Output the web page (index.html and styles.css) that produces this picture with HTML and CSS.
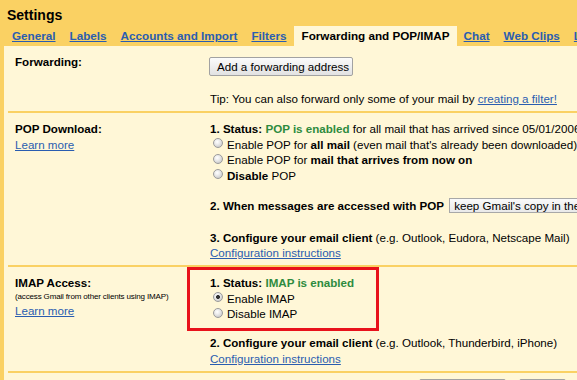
FILE: index.html
```html
<!DOCTYPE html>
<html lang="en">
<head>
<meta charset="utf-8">
<title>Settings</title>
<link rel="stylesheet" href="styles.css">
</head>
<body>
<div class="page">
  <header class="head">
    <h1 class="title">Settings</h1>
    <nav class="tabs">
      <a class="tab" href="#">General</a>
      <a class="tab" href="#">Labels</a>
      <a class="tab" href="#">Accounts and Import</a>
      <a class="tab" href="#">Filters</a>
      <span class="tab active">Forwarding and POP/IMAP</span>
      <a class="tab" href="#">Chat</a>
      <a class="tab" href="#">Web Clips</a>
      <a class="tab" href="#">Labs</a>
      <a class="tab" href="#">Offline</a>
    </nav>
  </header>

  <main class="panel">
    <section class="row">
      <div class="label"><b>Forwarding:</b></div>
      <div class="value">
        <div class="fwd-block"><button class="btn" type="button">Add a forwarding address</button></div>
        <div class="line">Tip: You can also forward only some of your mail by <a class="link" href="#">creating a filter!</a></div>
      </div>
    </section>

    <section class="row">
      <div class="label">
        <div class="line"><b>POP Download:</b></div>
        <div class="line"><a class="link" href="#">Learn more</a></div>
      </div>
      <div class="value">
        <div class="block">
          <div class="line"><b>1. Status: <span class="ok">POP is enabled</span></b> for all mail that has arrived since 05/01/2006 (hours ago)</div>
          <label class="line opt"><input class="radio" type="radio" name="pop"><span>Enable POP for <b>all mail</b> (even mail that's already been downloaded)</span></label>
          <label class="line opt"><input class="radio" type="radio" name="pop"><span>Enable POP for <b>mail that arrives from now on</b></span></label>
          <label class="line opt"><input class="radio" type="radio" name="pop"><span><b>Disable</b> POP</span></label>
        </div>
        <div class="line block2"><b>2. When messages are accessed with POP</b> <span class="select">keep Gmail's copy in the Inbox</span></div>
        <div class="line"><b>3. Configure your email client</b> (e.g. Outlook, Eudora, Netscape Mail)</div>
        <div class="line"><a class="link" href="#">Configuration instructions</a></div>
      </div>
    </section>

    <section class="row">
      <div class="label">
        <div class="line"><b>IMAP Access:</b></div>
        <div class="small">(access Gmail from other clients using IMAP)</div>
        <div class="line"><a class="link" href="#">Learn more</a></div>
      </div>
      <div class="value">
        <div class="block highlight">
          <div class="line"><b>1. Status: <span class="ok">IMAP is enabled</span></b></div>
          <label class="line opt"><input class="radio" type="radio" name="imap" checked><span>Enable IMAP</span></label>
          <label class="line opt"><input class="radio" type="radio" name="imap"><span>Disable IMAP</span></label>
        </div>
        <div class="line"><b>2. Configure your email client</b> (e.g. Outlook, Thunderbird, iPhone)</div>
        <div class="line"><a class="link" href="#">Configuration instructions</a></div>
      </div>
    </section>

    <div class="footer">
      <button class="btn btn-save" type="button">Save Changes</button>
      <button class="btn btn-cancel" type="button">Cancel</button>
    </div>
  </main>
</div>
</body>
</html>
```

FILE: styles.css
```css
html, body {
  margin: 0;
  padding: 0;
}
body {
  background: #fad163;
  font-family: "Liberation Sans", Arial, sans-serif;
  color: #000;
  overflow: hidden;
}
.page {
  width: 840px;
}
.head {
  padding-top: 6px;
}
.title {
  margin: 0 0 2px 7px;
  font-size: 14px;
  line-height: 18px;
  font-weight: bold;
}
.tabs {
  display: flex;
  height: 20px;
  padding-left: 5px;
  white-space: nowrap;
}
.tab {
  padding: 0 7px;
  font-size: 11.7px;
  line-height: 20px;
  font-weight: bold;
  color: #2a5db0;
  text-decoration: underline;
}
.tab.active {
  background: #fff7d7;
  color: #000;
  text-decoration: none;
  padding: 0 7px 0 8px;
}
.panel {
  margin-left: 4px;
  padding-left: 4px;
  background: #fff7d7;
  height: 400px;
}
.row {
  display: grid;
  grid-template-columns: 202px auto;
  padding: 8px 0 4.5px;
  border-bottom: 2px solid #fad163;
  font-size: 11.6px;
  line-height: 15.5px;
  white-space: nowrap;
}
.label {
  padding-left: 7px;
}
.value {
  display: flex;
  flex-direction: column;
}
.line {
  display: block;
  height: 15.5px;
}
.fwd-block {
  padding-top: 3px;
  margin-bottom: 15.2px;
  margin-left: -1px;
}
.block {
  margin-bottom: 15px;
}
.block2 {
  margin-bottom: 16px;
}
.highlight {
  position: relative;
  margin-bottom: 13.7px;
}
.highlight::after {
  content: "";
  position: absolute;
  top: -8px;
  left: -23px;
  width: 192px;
  height: 64px;
  border: 3px solid #e8121b;
  box-sizing: border-box;
  pointer-events: none;
}
.ok {
  color: #2e8b3e;
}
.link {
  color: #2a5db0;
  text-decoration: underline;
}
.small {
  font-size: 8px;
  line-height: 12px;
  height: 12px;
  letter-spacing: -0.15px;
}
.opt {
  display: flex;
  align-items: center;
}
.radio {
  appearance: none;
  -webkit-appearance: none;
  width: 10px;
  height: 10px;
  margin: 0 4px 2px 3px;
  padding: 0;
  border: 1px solid #9b9b9b;
  border-radius: 50%;
  background: radial-gradient(circle at 40% 35%, #ffffff 0, #ececec 35%, #bdbdbd 100%);
  box-sizing: border-box;
  flex: none;
}
.radio:checked {
  background:
    radial-gradient(circle at 50% 50%, #333 0, #333 1.6px, rgba(0,0,0,0) 2.3px),
    radial-gradient(circle at 40% 35%, #ffffff 0, #ececec 35%, #bdbdbd 100%);
}
.btn {
  font-family: "Liberation Sans", Arial, sans-serif;
  font-size: 11.6px;
  color: #000;
  height: 19px;
  padding: 0 7px;
  border: 1px solid #a2a2a2;
  border-radius: 2px;
  background: linear-gradient(#fbfbfb, #e2e2e2);
  line-height: 17px;
  box-sizing: border-box;
  width: 144px;
}
.select {
  display: inline-block;
  vertical-align: baseline;
  margin-left: 2px;
  padding: 0 4px;
  height: 15px;
  line-height: 13px;
  border: 1px solid #a8a8a8;
  background: linear-gradient(#fafafa, #e9e9e9);
  box-sizing: border-box;
}
.footer {
  display: flex;
  gap: 13px;
  padding: 6px 0 0 411px;
}
.btn-save {
  width: 87px;
  height: 22px;
}
.btn-cancel {
  width: 47px;
  height: 22px;
}
```
